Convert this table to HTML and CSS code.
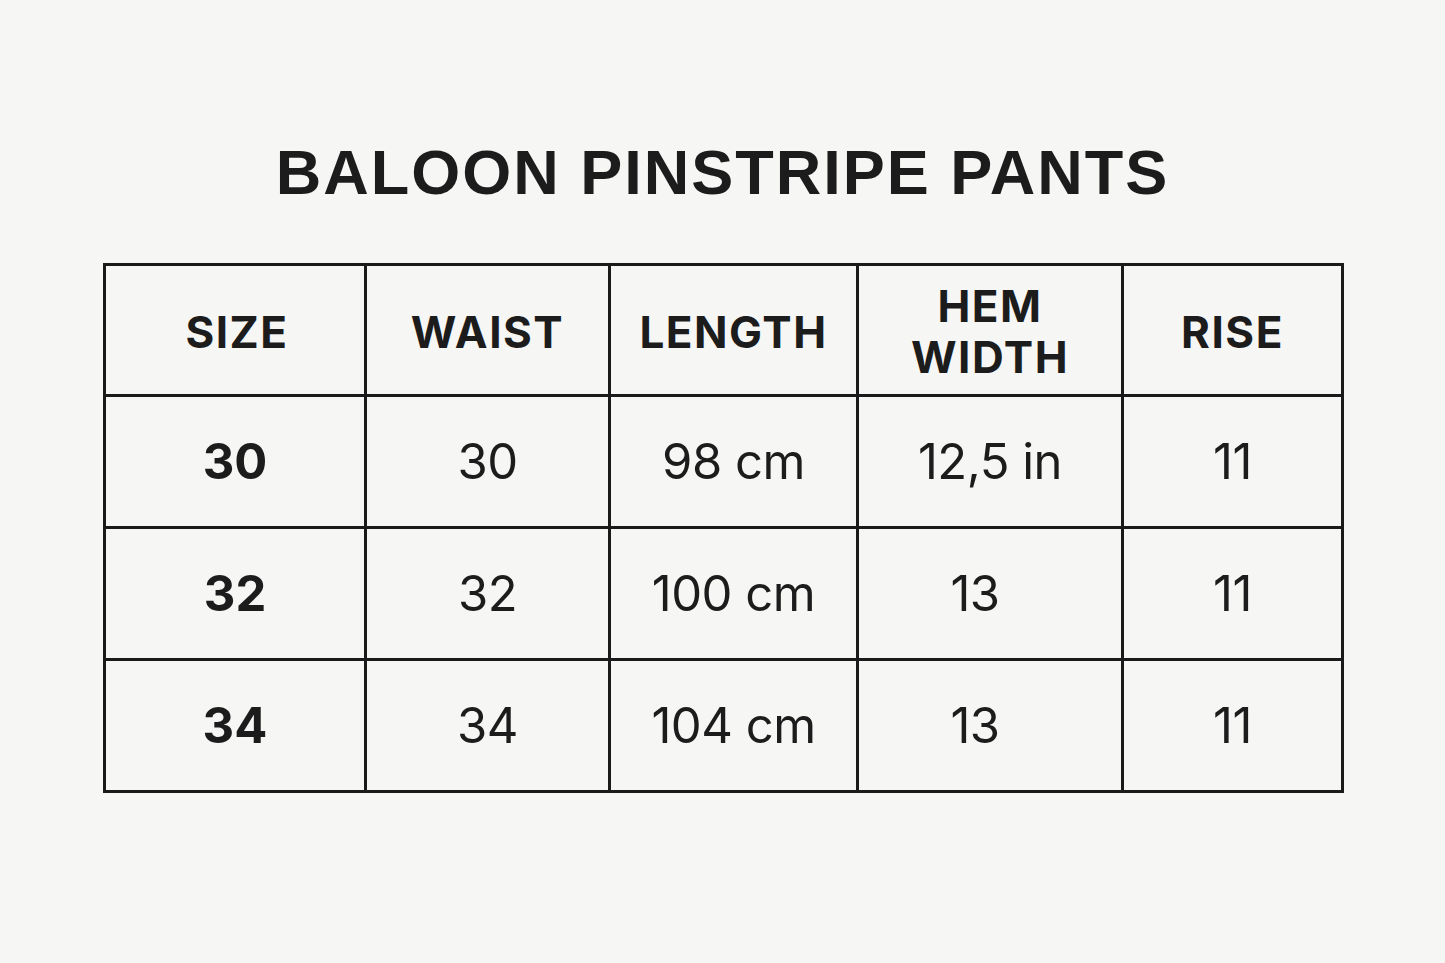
FILE: index.html
```html
<!DOCTYPE html>
<html lang="en">
<head>
<meta charset="utf-8">
<title>Baloon Pinstripe Pants – Size Chart</title>
<link rel="stylesheet" href="styles.css">
</head>
<body>
<main class="page">
  <h1 class="title">BALOON PINSTRIPE PANTS</h1>
  <table class="chart">
    <colgroup>
      <col class="c1"><col class="c2"><col class="c3"><col class="c4"><col class="c5">
    </colgroup>
    <thead>
      <tr>
        <th>SIZE</th>
        <th>WAIST</th>
        <th>LENGTH</th>
        <th>HEM<br>WIDTH</th>
        <th>RISE</th>
      </tr>
    </thead>
    <tbody>
      <tr>
        <td class="size">30</td>
        <td>30</td>
        <td>98 cm</td>
        <td>12,5 in</td>
        <td>11</td>
      </tr>
      <tr>
        <td class="size">32</td>
        <td>32</td>
        <td>100 cm</td>
        <td class="shift">13</td>
        <td>11</td>
      </tr>
      <tr>
        <td class="size">34</td>
        <td>34</td>
        <td>104 cm</td>
        <td class="shift">13</td>
        <td>11</td>
      </tr>
    </tbody>
  </table>
</main>
</body>
</html>
```
FILE: styles.css
```css
html, body {
  margin: 0;
  padding: 0;
  background: #f6f6f5;
}

body {
  font-family: Inter, "Liberation Sans", sans-serif;
  color: #1c1c1c;
}

.page {
  display: flex;
  flex-direction: column;
  align-items: center;
}

.title {
  margin: 0 0 0 0;
  padding-top: 136px;
  font-family: "Liberation Sans", Arial, sans-serif;
  font-size: 63px;
  font-weight: 700;
  letter-spacing: 2px;
  line-height: 72px;
  height: 72px;
}

.chart {
  margin-top: 55px;
  margin-left: 2px;
  width: 1238px;
  border-collapse: collapse;
  border: 3px solid #1a1a1a;
  table-layout: fixed;
}

.c1 { width: 261px; }
.c2 { width: 244px; }
.c3 { width: 248px; }
.c4 { width: 265px; }
.c5 { width: 220px; }

.chart th,
.chart td {
  border: 3px solid #1a1a1a;
  text-align: center;
  vertical-align: middle;
  padding: 0;
  height: 129px;
}

.chart th {
  height: 124px;
  padding-top: 4px;
  font-size: 44px;
  font-weight: 700;
  letter-spacing: 1.5px;
  line-height: 51px;
}

.chart th:first-child {
  padding-left: 4px;
}

.chart td {
  font-size: 49px;
  font-weight: 400;
  letter-spacing: -0.5px;
}

.chart td.size {
  font-weight: 700;
  letter-spacing: 0;
}

.chart td.shift {
  padding-right: 30px;
}
```
